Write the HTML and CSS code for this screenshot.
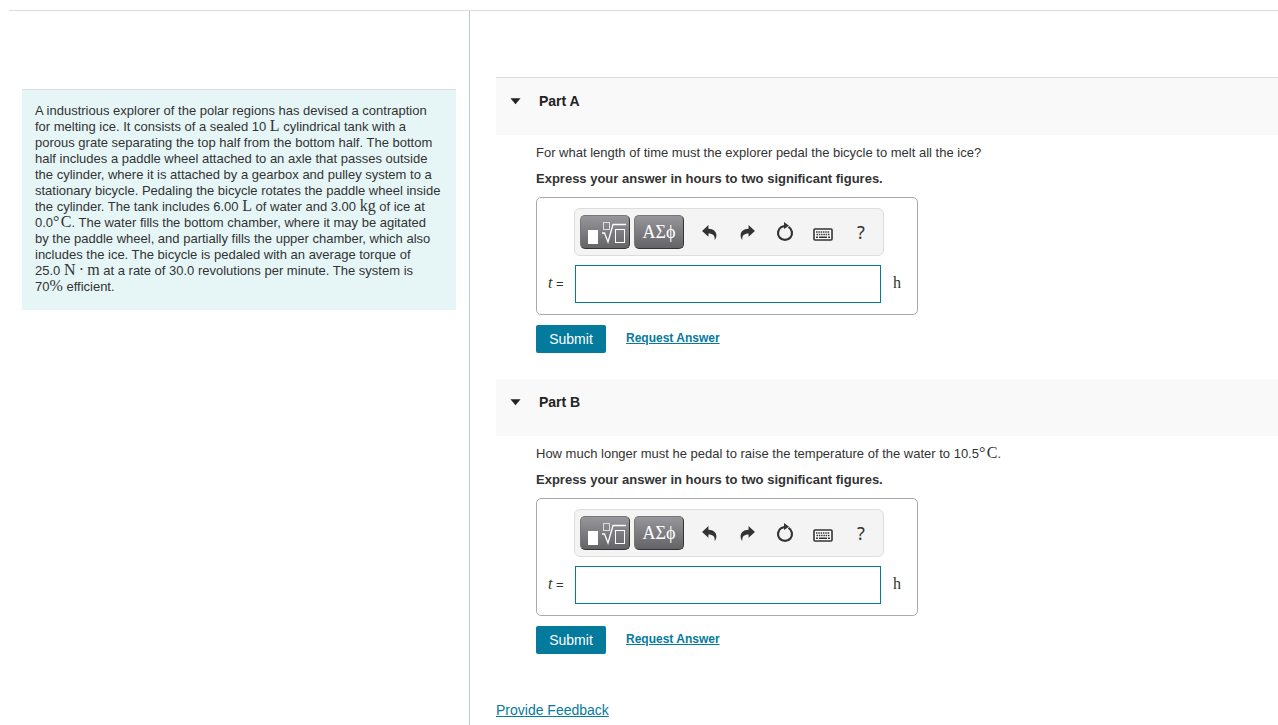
FILE: index.html
```html
<!DOCTYPE html>
<html lang="en">
<head>
<meta charset="utf-8">
<meta name="viewport" content="width=device-width, initial-scale=1">
<title>Polar explorer problem</title>
<link rel="stylesheet" href="styles.css">
</head>
<body>
<svg class="sprite" aria-hidden="true">
  <symbol id="i-template" viewBox="0 0 42 24">
    <rect x="4" y="10" width="10" height="14" fill="#fff"/>
    <rect x="19.500" y="2.500" width="6" height="7" fill="none" stroke="#ddd"/>
    <path d="M18 13h2.500l3.500 9 5-17.500H42" fill="none" stroke="#fff" stroke-width="1.300"/>
    <rect x="31.500" y="9.500" width="9" height="13" fill="none" stroke="#fff"/>
  </symbol>
  <symbol id="i-undo" viewBox="0 0 16 16">
    <path d="M1 6.500 7 1v3.500c5 0 7.500 3 7.500 6 0 1.800-.6 3.300-1.600 4.500.4-4-1.600-6-5.900-6v3z" fill="#333"/>
  </symbol>
  <symbol id="i-reset" viewBox="0 0 18 20">
    <path d="M12.500 4.900A7 7 0 1 1 5.500 4.900L9.500 3.700" fill="none" stroke="#333" stroke-width="2.200"/>
    <path d="M8 0l5 3.800L8 7z" fill="#333"/>
  </symbol>
  <symbol id="i-keyboard" viewBox="0 0 20 13">
    <rect x="1" y="1" width="18" height="11" rx="1" fill="#fff" stroke="#333" stroke-width="1.600"/>
    <path d="M3 4h14M3.500 6.500h13" stroke="#333" stroke-width="1.500" stroke-dasharray="1.500 .8"/>
    <path d="M3 9.300h2M6 9.300h8M15 9.300h2" stroke="#333" stroke-width="1.500"/>
  </symbol>
  <symbol id="i-caret" viewBox="0 0 12 7"><path d="M.5 0h11L6 6.500z" fill="#222"/></symbol>
</svg>
<main class="page">
  <aside class="sidebar">
    <p class="problem">A industrious explorer of the polar regions has devised a contraption for melting ice. It consists of a sealed 10 <span class="math">L</span> cylindrical tank with a porous grate separating the top half from the bottom half. The bottom half includes a paddle wheel attached to an axle that passes outside the cylinder, where it is attached by a gearbox and pulley system to a stationary bicycle. Pedaling the bicycle rotates the paddle wheel inside the cylinder. The tank includes 6.00 <span class="math">L</span> of water and 3.00 <span class="math">kg</span> of ice at 0.0<span class="math">°&#8202;C</span>. The water fills the bottom chamber, where it may be agitated by the paddle wheel, and partially fills the upper chamber, which also includes the ice. The bicycle is pedaled with an average torque of 25.0&nbsp;<span class="math">N&#8201;·&#8201;m</span> at a rate of 30.0 revolutions per minute. The system is 70<span class="math">%</span>&nbsp;efficient.</p>
  </aside>
  <div class="content">
    <section class="part">
      <h2 class="part-header part-header-first"><svg class="caret"><use href="#i-caret"/></svg>Part A</h2>
      <div class="part-body">
        <p class="question">For what length of time must the explorer pedal the bicycle to melt all the ice?</p>
        <p class="instruction">Express your answer in hours to two significant figures.</p>
        <div class="answer">
          <div class="toolbar">
            <button type="button" class="key" aria-label="Templates"><svg class="icon-template"><use href="#i-template"/></svg></button>
            <button type="button" class="key">ΑΣϕ</button>
            <button type="button" class="tool" aria-label="Undo"><svg class="icon-arrow"><use href="#i-undo"/></svg></button>
            <button type="button" class="tool" aria-label="Redo"><svg class="icon-arrow flipped"><use href="#i-undo"/></svg></button>
            <button type="button" class="tool" aria-label="Reset"><svg class="icon-reset"><use href="#i-reset"/></svg></button>
            <button type="button" class="tool" aria-label="Keyboard shortcuts"><svg class="icon-keyboard"><use href="#i-keyboard"/></svg></button>
            <button type="button" class="tool">?</button>
          </div>
          <div class="entry">
            <label class="variable" for="answer-a"><i>t</i> =</label>
            <input class="field" id="answer-a" type="text">
            <span class="unit">h</span>
          </div>
        </div>
        <div class="actions">
          <button type="button" class="submit">Submit</button>
          <a class="request" href="#">Request Answer</a>
        </div>
      </div>
    </section>
    <section class="part">
      <h2 class="part-header"><svg class="caret"><use href="#i-caret"/></svg>Part B</h2>
      <div class="part-body">
        <p class="question">How much longer must he pedal to raise the temperature of the water to 10.5<span class="math">°&#8202;C</span>.</p>
        <p class="instruction">Express your answer in hours to two significant figures.</p>
        <div class="answer">
          <div class="toolbar">
            <button type="button" class="key" aria-label="Templates"><svg class="icon-template"><use href="#i-template"/></svg></button>
            <button type="button" class="key">ΑΣϕ</button>
            <button type="button" class="tool" aria-label="Undo"><svg class="icon-arrow"><use href="#i-undo"/></svg></button>
            <button type="button" class="tool" aria-label="Redo"><svg class="icon-arrow flipped"><use href="#i-undo"/></svg></button>
            <button type="button" class="tool" aria-label="Reset"><svg class="icon-reset"><use href="#i-reset"/></svg></button>
            <button type="button" class="tool" aria-label="Keyboard shortcuts"><svg class="icon-keyboard"><use href="#i-keyboard"/></svg></button>
            <button type="button" class="tool">?</button>
          </div>
          <div class="entry">
            <label class="variable" for="answer-b"><i>t</i> =</label>
            <input class="field" id="answer-b" type="text">
            <span class="unit">h</span>
          </div>
        </div>
        <div class="actions">
          <button type="button" class="submit">Submit</button>
          <a class="request" href="#">Request Answer</a>
        </div>
      </div>
    </section>
    <a class="feedback" href="#">Provide Feedback</a>
  </div>
</main>
</body>
</html>
```
FILE: styles.css
```css
* { box-sizing: border-box; }
body {
  margin: 0;
  padding: 10px 0 0 9px;
  background: #fff;
  color: #333;
  font: 13px/16px "Liberation Sans", Arial, sans-serif;
}
h2, p { margin: 0; }
button { padding: 0; font-family: inherit; cursor: pointer; }
.sprite { position: absolute; width: 0; height: 0; }
.page {
  display: grid;
  grid-template-columns: 461px 1fr;
  min-height: calc(100vh - 10px);
  border-top: 1px solid #ddd;
}
.sidebar {
  padding: 78px 13px 0;
  border-right: 1px solid #bcc8d8;
}
.problem {
  padding: 13px 15px 15px 13px;
  border-top: 1px solid #ddd;
  background: #e6f6f7;
}
.math {
  font-family: "Liberation Serif", "Times New Roman", serif;
  font-size: 16px;
  line-height: 1px;
}
.content { padding: 66px 0 0 26px; }
.part-header {
  display: flex;
  align-items: flex-start;
  gap: 18px;
  height: 57px;
  padding: 15px 14px;
  background: #f9f9f9;
  color: #222;
  font-size: 14px;
  line-height: 16px;
}
.part-header-first {
  height: 58px;
  border-top: 1px solid #ddd;
}
.caret { width: 11px; height: 7px; margin-top: 5px; }
.part-body { padding: 10px 0 26px 40px; }
.instruction { margin-top: 10px; font-weight: bold; }
.answer {
  width: 382px;
  max-width: 100%;
  height: 118px;
  margin-top: 10px;
  padding: 10px 12px 10px 11px;
  border: 1px solid #aaa;
  border-radius: 5px;
}
.toolbar {
  display: flex;
  align-items: center;
  gap: 4px;
  width: 310px;
  height: 48px;
  margin-left: 26px;
  padding: 0 5px;
  border: 1px solid #ddd;
  border-radius: 6px;
  background: #f4f4f4;
}
.key {
  display: grid;
  place-items: center;
  width: 50px;
  height: 34px;
  border: 1px solid #333;
  border-top-color: #777;
  border-left-color: #777;
  border-radius: 5px;
  background: linear-gradient(#96969b, #646467);
  color: #fff;
  font: 18px/20px "Liberation Serif", serif;
}
.tool {
  display: grid;
  place-items: center;
  width: 34px;
  height: 34px;
  border: 0;
  background: none;
  color: #333;
  font: 18px/20px "Noto Sans", sans-serif;
}
.key + .tool { margin-left: 4px; }
.icon-template { width: 42px; height: 24px; }
.icon-arrow { width: 17px; height: 17px; }
.icon-reset { width: 18px; height: 20px; }
.icon-keyboard { width: 20px; height: 13px; margin-top: 4px; }
.flipped { transform: scaleX(-1); }
.entry { display: flex; align-items: center; margin-top: 9px; }
.variable { width: 27px; padding-bottom: 2px; white-space: nowrap; }
.variable i, .unit { font: 16px/16px "Liberation Serif", serif; }
.variable i { font-style: italic; }
.field {
  width: 306px;
  height: 38px;
  padding: 0 8px;
  border: 1px solid #047a9c;
  background: #fff;
  font: inherit;
}
.unit { margin-left: 12px; padding-bottom: 2px; }
.actions { display: flex; align-items: center; gap: 20px; margin-top: 10px; }
.submit {
  width: 70px;
  height: 28px;
  border: 0;
  border-radius: 2px;
  background: #047a9c;
  color: #fff;
  font-size: 14px;
}
.request { margin-bottom: 2px; color: #047a9c; font-size: 12px; font-weight: bold; }
.feedback { display: inline-block; margin-top: 22px; color: #047a9c; font-size: 14px; }
```
